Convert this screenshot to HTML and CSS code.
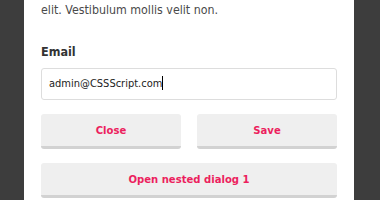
FILE: index.html
```html
<!DOCTYPE html>
<html lang="en">
	<head>
		<meta charset="utf-8">
		<title>Dialog</title>
		<link rel="stylesheet" href="styles.css">
	</head>
	<body>
		<div class="dialog">
			<p class="text">Lorem ipsum dolor sit amet, consectetur adipiscing<br>elit. Vestibulum mollis velit non.</p>

			<label class="label">Email</label>
			<div class="field">admin@CSSScript.com<span class="caret"></span></div>

			<div class="actions">
				<a href="javascript:;" class="btn">Close</a>
				<a href="javascript:;" class="btn">Save</a>
			</div>
			<a href="javascript:;" class="btn btn-wide">Open nested dialog 1</a>
		</div>
	</body>
</html>
```

FILE: styles.css
```css
body {
	margin: 0;
	background-color: #3d3d3d;
	font-family: "DejaVu Sans Condensed", "DejaVu Sans", sans-serif;
}
a {
	text-decoration: none;
}

.dialog {
	width: 296px;
	height: 200px;
	margin-left: 24px;
	padding: 0 17px;
	background-color: #fff;
	overflow: hidden;
}

.text {
	margin: -18px 0 0;
	font-size: 12.3px;
	line-height: 19px;
	color: #4a4a4a;
}

.label {
	display: block;
	margin-top: 22px;
	font-size: 12.5px;
	line-height: 19px;
	font-weight: bold;
	color: #333;
}

.field {
	height: 30px;
	margin-top: 7px;
	padding: 0 7px;
	border: 1px solid #ddd;
	border-radius: 3px;
	font-size: 11px;
	line-height: 30px;
	color: #222;
}

.caret {
	display: inline-block;
	width: 0;
	height: 14px;
	border-left: 1px solid #000;
	vertical-align: -3px;
}

.actions {
	display: flex;
	gap: 16px;
	margin-top: 14px;
}

.btn {
	display: block;
	flex: 1;
	height: 32px;
	border-bottom: 3px solid #d2d2d2;
	border-radius: 3px;
	background-color: #efefef;
	font-size: 11.2px;
	font-weight: bold;
	line-height: 33px;
	text-align: center;
	color: #ec1f5e;
}

.btn-wide {
	margin-top: 14px;
}
```
